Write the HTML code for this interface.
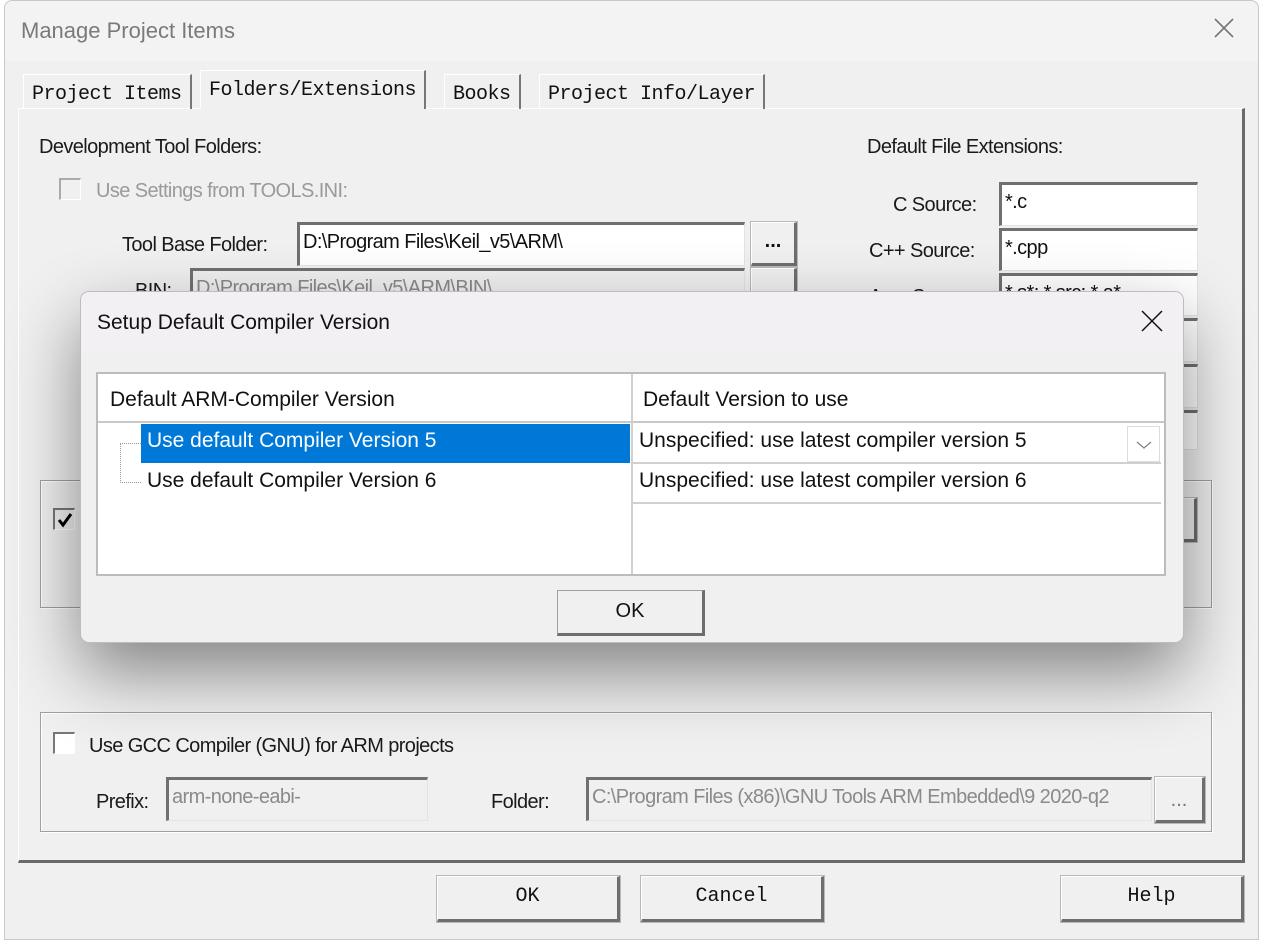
<!DOCTYPE html>
<html><head><meta charset="utf-8"><style>
*{box-sizing:border-box;margin:0;padding:0}
body{width:1263px;height:943px;background:#fff;position:relative;overflow:hidden;font-family:"Liberation Sans",sans-serif;}
.a{position:absolute}
.win{left:4px;top:0;width:1255px;height:940px;background:#f0f0f0;border:1px solid #c8c8c8;border-radius:8px 8px 0 0;}
.tbar{left:0;top:0;width:1253px;height:60px;background:#f3f3f3;border-radius:8px 8px 0 0}
.lbl{font-size:20px;color:#1a1a1a;letter-spacing:-0.6px;white-space:nowrap}
.sunk{background:#fff;border-top:3px solid #707070;border-left:3px solid #707070;border-right:1px solid #e3e3e3;border-bottom:1px solid #e3e3e3;font-size:20px;letter-spacing:-0.6px;padding:6px 3px 0 3px;white-space:nowrap;overflow:hidden;color:#111}
.dis{background:#f0f0f0;color:#8a8a8a}
.btn{background:#f0f0f0;border-top:1px solid #fff;border-left:1px solid #fff;border-right:3px solid #6e6e6e;border-bottom:3px solid #6e6e6e;outline:1px solid #b9b9b9;text-align:center;font-family:"Liberation Mono",monospace;font-size:20px;color:#111}
.tab{font-family:"Liberation Mono",monospace;font-size:20px;color:#111;border-top:1px solid #fff;border-left:1px solid #fff;border-right:2px solid #777;padding:8px 8px 0 8px;height:36px;white-space:nowrap;letter-spacing:-0.5px}
.grp{border:1px solid #a0a0a0;box-shadow:inset 1px 1px 0 #fff,1px 1px 0 #fff}
.cb{width:22px;height:22px;border-top:2px solid #777;border-left:2px solid #777;border-right:1px solid #fff;border-bottom:1px solid #fff;background:#fff}
.dlg{left:80px;top:291px;width:1104px;height:352px;background:#f0f0f0;border:1px solid #bdbdbd;border-radius:9px;box-shadow:0 30px 70px rgba(0,0,0,.45);overflow:hidden}
.seg{font-family:"Liberation Sans","DejaVu Sans",sans-serif;font-size:21px;color:#111;white-space:nowrap}
</style></head><body>
<div class="a win">
 <div class="a tbar"></div>
 <div class="a" style="left:16px;top:17px;font-size:22px;color:#7a7a7a">Manage Project Items</div>
 <svg class="a" style="left:1208px;top:16px" width="22" height="22"><path d="M2 2L20 20M20 2L2 20" stroke="#777" stroke-width="1.6"/></svg>
</div>
<div class="a" style="left:18px;top:108px;width:1227px;height:755px;border-top:1px solid #fff;border-left:1px solid #fff;border-right:3px solid #6a6a6a;border-bottom:3px solid #6a6a6a"></div>
<div class="a tab" style="left:23px;top:74px;height:35px">Project Items</div>
<div class="a tab" style="left:200px;top:70px;height:39px;background:#f0f0f0;border-bottom:none">Folders/Extensions</div>
<div class="a tab" style="left:444px;top:74px;height:35px">Books</div>
<div class="a tab" style="left:539px;top:74px;height:35px">Project Info/Layer</div>

<div class="a lbl" style="left:39px;top:136px">Development Tool Folders:</div>
<div class="a cb" style="left:59px;top:178px;background:#f0f0f0;border-color:#aaa #fff #fff #aaa"></div>
<div class="a lbl" style="left:96px;top:180px;color:#9a9a9a">Use Settings from TOOLS.INI:</div>
<div class="a lbl" style="left:122px;top:234px">Tool Base Folder:</div>
<div class="a sunk" style="left:297px;top:222px;width:448px;height:44px">D:\Program Files\Keil_v5\ARM\</div>
<div class="a btn" style="left:751px;top:222px;width:46px;height:44px;font-family:'Liberation Sans';font-weight:bold;line-height:36px">...</div>
<div class="a lbl" style="left:135px;top:280px">BIN:</div>
<div class="a sunk dis" style="left:190px;top:268px;width:555px;height:40px">D:\Program Files\Keil_v5\ARM\BIN\</div>
<div class="a btn" style="left:751px;top:268px;width:46px;height:40px"></div>

<div class="a lbl" style="left:867px;top:136px">Default File Extensions:</div>
<div class="a lbl" style="left:893px;top:194px">C Source:</div>
<div class="a lbl" style="left:869px;top:240px">C++ Source:</div>
<div class="a lbl" style="left:869px;top:286px">Asm Source:</div>
<div class="a sunk" style="left:999px;top:182px;width:199px;height:44px">*.c</div>
<div class="a sunk" style="left:999px;top:228px;width:199px;height:43px">*.cpp</div>
<div class="a sunk" style="left:999px;top:273px;width:199px;height:43px">*.s*; *.src; *.a*</div>
<div class="a sunk" style="left:999px;top:318px;width:199px;height:44px"></div>
<div class="a sunk" style="left:999px;top:364px;width:199px;height:44px"></div>
<div class="a sunk" style="left:999px;top:410px;width:199px;height:40px"></div>

<div class="a grp" style="left:40px;top:480px;width:1172px;height:128px"></div>
<div class="a cb" style="left:53px;top:508px;background:#f0f0f0"><svg width="18" height="18" style="position:absolute;left:1px;top:1px"><path d="M3 9L7 14L15 3" stroke="#000" stroke-width="3" fill="none"/></svg></div>
<div class="a btn" style="left:1150px;top:498px;width:47px;height:44px"></div>

<div class="a grp" style="left:40px;top:712px;width:1172px;height:120px"></div>
<div class="a cb" style="left:53px;top:732px"></div>
<div class="a lbl" style="left:89px;top:735px">Use GCC Compiler (GNU) for ARM projects</div>
<div class="a lbl" style="left:96px;top:791px">Prefix:</div>
<div class="a sunk dis" style="left:166px;top:777px;width:262px;height:44px">arm-none-eabi-</div>
<div class="a lbl" style="left:491px;top:791px">Folder:</div>
<div class="a sunk dis" style="left:586px;top:777px;width:566px;height:44px">C:\Program Files (x86)\GNU Tools ARM Embedded\9 2020-q2</div>
<div class="a btn" style="left:1155px;top:777px;width:50px;height:46px;font-family:'Liberation Sans';line-height:44px;color:#777">...</div>

<div class="a btn" style="left:437px;top:876px;width:183px;height:46px;line-height:40px">OK</div>
<div class="a btn" style="left:641px;top:876px;width:183px;height:46px;line-height:40px">Cancel</div>
<div class="a btn" style="left:1061px;top:876px;width:183px;height:46px;line-height:40px">Help</div>

<div class="a dlg">
 <div class="a" style="left:0;top:0;width:1104px;height:62px;background:#f3f0f3"></div>
 <div class="a seg" style="left:16px;top:19px">Setup Default Compiler Version</div>
 <svg class="a" style="left:1060px;top:18px" width="22" height="22"><path d="M1 1L21 21M21 1L1 21" stroke="#111" stroke-width="1.5"/></svg>
 <div class="a" style="left:15px;top:80px;width:1070px;height:204px;background:#fff;border:2px solid #bcbcbc">
  <div class="a" style="left:0;top:47px;width:1066px;height:2px;background:#c8c8c8"></div>
  <div class="a" style="left:533px;top:0;width:2px;height:200px;background:#d0d0d0"></div>
  <div class="a seg" style="left:12px;top:14px">Default ARM-Compiler Version</div>
  <div class="a seg" style="left:545px;top:14px">Default Version to use</div>
  <div class="a" style="left:43px;top:50px;width:489px;height:39px;background:#0078d7"></div>
  <div class="a seg" style="left:49px;top:55px;color:#fff">Use default Compiler Version 5</div>
  <div class="a seg" style="left:49px;top:95px">Use default Compiler Version 6</div>
  <div class="a" style="left:22px;top:69px;width:21px;height:40px;border-left:1px dotted #999;border-top:1px dotted #999;border-bottom:1px dotted #999"></div>
  <div class="a seg" style="left:541px;top:55px">Unspecified: use latest compiler version 5</div>
  <div class="a seg" style="left:541px;top:95px">Unspecified: use latest compiler version 6</div>
  <div class="a" style="left:535px;top:88px;width:528px;height:2px;background:#d0d0d0"></div>
  <div class="a" style="left:535px;top:128px;width:528px;height:2px;background:#d0d0d0"></div>
  <div class="a" style="left:1029px;top:52px;width:33px;height:36px;border:1px solid #ddd;background:#fff"><svg width="31" height="34"><path d="M9 15L16 21L23 15" stroke="#888" stroke-width="1.4" fill="none"/></svg></div>
 </div>
 <div class="a btn" style="left:476px;top:298px;width:148px;height:46px;font-family:'Liberation Sans';line-height:40px;outline:none;border-top:1px solid #a0a0a0;border-left:1px solid #a0a0a0">OK</div>
</div>
</body></html>
